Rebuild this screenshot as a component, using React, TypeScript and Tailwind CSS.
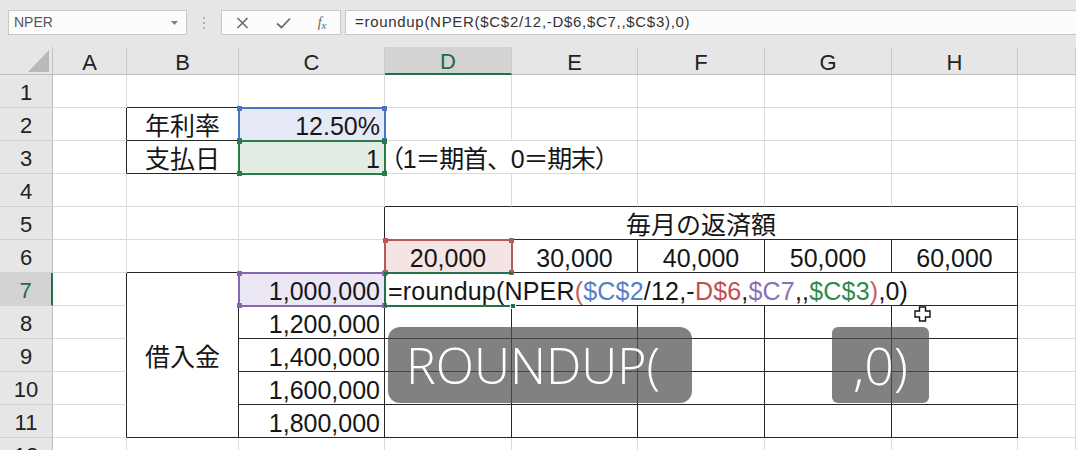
import React from 'react';

const FONT = "font-['Liberation_Sans','Noto_Sans_CJK_JP',sans-serif]";

type CellDef = {
  text?: React.ReactNode;
  align?: 'l' | 'c' | 'r';
  span?: 2 | 5;
  rowSpan?: 5;
  bg?: string;
};

const COLS = ['A', 'B', 'C', 'D', 'E', 'F', 'G', 'H', ''];
const ROWS = [1, 2, 3, 4, 5, 6, 7, 8, 9, 10, 11, 12];

const Formula = () => (
  <span className="tracking-[0.2px]">
    =roundup(NPER<span className="text-[#c5605c]">(</span>
    <span className="text-[#5580c6]">$C$2</span>/12,-
    <span className="text-[#c24f4f]">D$6</span>,
    <span className="text-[#8a6fb6]">$C7</span>,,
    <span className="text-[#2f8a4f]">$C$3</span>
    <span className="text-[#c5605c]">)</span>,0)
  </span>
);

const cells: Record<string, CellDef> = {
  '2-1': { text: '年利率', align: 'c' },
  '2-2': { text: '12.50%', align: 'r', bg: 'bg-[#e6eaf6]' },
  '3-1': { text: '支払日', align: 'c' },
  '3-2': { text: '1', align: 'r', bg: 'bg-[#e2eee4]' },
  '3-3': { text: <span className="-ml-[9px] tracking-[-1.2px]">（1＝期首、0＝期末）</span>, align: 'l', span: 2 },
  '5-3': { text: '毎月の返済額', align: 'c', span: 5 },
  '6-3': { text: '20,000', align: 'c', bg: 'bg-[#f5e4e4]' },
  '6-4': { text: '30,000', align: 'c' },
  '6-5': { text: '40,000', align: 'c' },
  '6-6': { text: '50,000', align: 'c' },
  '6-7': { text: '60,000', align: 'c' },
  '7-1': { text: '借入金', align: 'c', rowSpan: 5 },
  '7-2': { text: '1,000,000', align: 'r', bg: 'bg-[#ebe7f4]' },
  '7-3': { text: <Formula />, align: 'l', span: 5 },
  '8-2': { text: '1,200,000', align: 'r' },
  '9-2': { text: '1,400,000', align: 'r' },
  '10-2': { text: '1,600,000', align: 'r' },
  '11-2': { text: '1,800,000', align: 'r' },
};

// cells that carry a black border in the sheet
const boxed = (r: number, c: number) => {
  if (c === 1 && (r === 2 || r === 3)) return true;
  if ((c === 1 || c === 2) && r >= 7 && r <= 11) return true;
  if (c >= 3 && c <= 7 && r >= 5 && r <= 11) return true;
  return false;
};

const covered = new Set<string>();
Object.entries(cells).forEach(([key, def]) => {
  const [r, c] = key.split('-').map(Number);
  const cs = def.span ?? 1;
  const rs = def.rowSpan ?? 1;
  for (let i = 0; i < rs; i++)
    for (let j = 0; j < cs; j++) if (i || j) covered.add(`${r + i}-${c + j}`);
});

const spanClass = { 2: 'col-span-2', 5: 'col-span-5' } as const;
const alignClass = { l: 'justify-start pl-[3px]', c: 'justify-center', r: 'justify-end pr-[4px]' } as const;

const Corners = ({ color }: { color: string }) => (
  <>
    <span className={`absolute -left-[3px] -top-[3px] w-[5px] h-[5px] ${color}`} />
    <span className={`absolute -right-[3px] -top-[3px] w-[5px] h-[5px] ${color}`} />
    <span className={`absolute -left-[3px] -bottom-[3px] w-[5px] h-[5px] ${color}`} />
    <span className={`absolute -right-[3px] -bottom-[3px] w-[5px] h-[5px] ${color}`} />
  </>
);

const Toolbar = () => (
  <div className="h-[47px] bg-[#e6e6e6] pt-[10px] pl-[8px] flex items-start">
    <div className="w-[179px] h-[25px] border border-[#c8c8c8] bg-[#fcfcfc] flex items-center justify-between pl-[5px] pr-[8px]">
      <span className="text-[14px] text-[#555] font-['Liberation_Sans',sans-serif]">NPER</span>
      <svg width="7" height="4" viewBox="0 0 7 4">
        <path d="M0 0 H7 L3.5 4 Z" fill="#808080" />
      </svg>
    </div>
    <div className="ml-[16px] mt-[7px] flex flex-col gap-[3px]">
      <span className="w-[2px] h-[2px] bg-[#b4b4b4]" />
      <span className="w-[2px] h-[2px] bg-[#b4b4b4]" />
      <span className="w-[2px] h-[2px] bg-[#b4b4b4]" />
    </div>
    <div className="ml-[16px] w-[120px] h-[25px] border border-[#c8c8c8] bg-[#fcfcfc] flex items-center justify-around">
      <svg width="13" height="12" viewBox="0 0 13 12">
        <path d="M1.5 1 L11.5 11 M11.5 1 L1.5 11" stroke="#6b6b6b" strokeWidth="1.6" fill="none" />
      </svg>
      <svg width="15" height="12" viewBox="0 0 15 12">
        <path d="M1 6.5 L5.5 10.5 L14 1.5" stroke="#6b6b6b" strokeWidth="1.8" fill="none" />
      </svg>
      <span className="text-[14px] text-[#666] italic font-['Liberation_Serif',serif] leading-none">
        f<span className="text-[11px] relative top-[2px]">x</span>
      </span>
    </div>
    <div className="ml-[4px] flex-1 h-[25px] border border-r-0 border-[#c8c8c8] bg-[#fcfcfc] flex items-center pl-[9px]">
      <span className="text-[15px] tracking-[0.7px] text-[#333] font-['Liberation_Sans',sans-serif]">
        =roundup(NPER($C$2/12,-D$6,$C7,,$C$3),0)
      </span>
    </div>
  </div>
);

const Sheet = () => {
  const items: React.ReactNode[] = [];

  items.push(
    <div key="corner" className="bg-[#e6e6e6] border-r border-b border-r-[#c4c4c4] border-b-[#bdbdbd] flex items-end justify-end pr-[3px] pb-[2px]">
      <svg width="21" height="22" viewBox="0 0 21 22">
        <path d="M0 22 H21 V0 Z" fill="#b9b9b9" />
      </svg>
    </div>
  );
  COLS.forEach((name, c) => {
    const active = c === 3;
    items.push(
      <div
        key={`h-${c}`}
        className={`flex items-center justify-center pt-[3px] text-[22px] border-r border-r-[#cacaca] ${
          active
            ? 'bg-[#d3d3d3] text-[#1f6b42] border-b-2 border-b-[#217346]'
            : 'bg-[#e6e6e6] text-[#222] border-b border-b-[#bdbdbd]'
        }`}
      >
        {name}
      </div>
    );
  });

  ROWS.forEach((r) => {
    const active = r === 7;
    items.push(
      <div
        key={`r-${r}`}
        className={`flex items-center justify-center pt-[3px] text-[22px] border-b border-b-[#d0d0d0] ${
          active
            ? 'bg-[#d3d3d3] text-[#1f6b42] border-r-2 border-r-[#217346]'
            : 'bg-[#e6e6e6] text-[#222] border-r border-r-[#bdbdbd]'
        }`}
      >
        {r}
      </div>
    );
    for (let c = 0; c < 9; c++) {
      const key = `${r}-${c}`;
      if (covered.has(key)) continue;
      const def = cells[key] ?? {};
      const lastC = c + (def.span ?? 1) - 1;
      const lastR = r + (def.rowSpan ?? 1) - 1;
      const darkR = boxed(r, lastC) || boxed(r, lastC + 1);
      const darkB = boxed(lastR, c) || boxed(lastR + 1, c);
      items.push(
        <div
          key={key}
          className={`flex items-center pt-[4px] whitespace-nowrap text-[25px] leading-none text-[#161616] border-r border-b ${
            darkR ? 'border-r-[#262626]' : 'border-r-[#dadada]'
          } ${darkB ? 'border-b-[#262626]' : 'border-b-[#dadada]'} ${def.span ? spanClass[def.span] : ''} ${
            def.rowSpan ? 'row-span-5' : ''
          } ${alignClass[def.align ?? 'l']} ${def.bg ?? ''}`}
        >
          {def.text}
        </div>
      );
    }
  });

  return (
    <div className={`grid grid-cols-[53px_74px_112px_146px_127px_126px_127px_127px_126px_1fr] grid-rows-[28px] auto-rows-[33px] ${FONT}`}>
      {items}
    </div>
  );
};

export default function App() {
  return (
    <div className="relative w-[1076px] h-[450px] overflow-hidden bg-white">
      <Toolbar />
      <Sheet />

      {/* formula reference highlights */}
      <div className="absolute left-[238px] top-[107px] w-[148px] h-[35px] border-2 border-[#4a74c0]">
        <Corners color="bg-[#4a74c0]" />
      </div>
      <div className="absolute left-[238px] top-[140px] w-[148px] h-[35px] border-2 border-[#2a7a4a]">
        <Corners color="bg-[#2a7a4a]" />
      </div>
      <div className="absolute left-[384px] top-[239px] w-[129px] h-[35px] border-2 border-[#b45a5a]">
        <Corners color="bg-[#b45a5a]" />
      </div>
      <div className="absolute left-[238px] top-[272px] w-[148px] h-[35px] border-2 border-[#8467ad]">
        <Corners color="bg-[#8467ad]" />
      </div>
      {/* active cell D7 */}
      <div className="absolute left-[384px] top-[272px] w-[129px] h-[35px] border-l-2 border-t-2 border-b-2 border-[#217346]">
        <span className="absolute -right-[3px] -bottom-[4px] w-[6px] h-[6px] bg-[#217346] border border-white" />
      </div>

      {/* caption overlays */}
      <div className="absolute left-[388px] top-[327px] w-[304px] h-[76px] rounded-[12px] bg-[rgba(80,80,80,0.72)] flex items-center pl-[18px]">
        <span className="text-white text-[50px] font-light leading-none font-['Open_Sans',sans-serif]">ROUNDUP(</span>
      </div>
      <div className="absolute left-[832px] top-[327px] w-[97px] h-[76px] rounded-[6px] bg-[rgba(80,80,80,0.72)] flex items-center justify-center">
        <span className="text-white text-[52px] font-light leading-none font-['Open_Sans',sans-serif]">,0)</span>
      </div>

      {/* mouse cursor */}
      <svg className="absolute left-[914px] top-[306px]" width="17" height="16" viewBox="0 0 17 16">
        <path d="M5.5 1 H11.5 V5 H16 V11 H11.5 V15 H5.5 V11 H1 V5 H5.5 Z" fill="#fff" stroke="#111" strokeWidth="1.4" />
      </svg>
    </div>
  );
}
